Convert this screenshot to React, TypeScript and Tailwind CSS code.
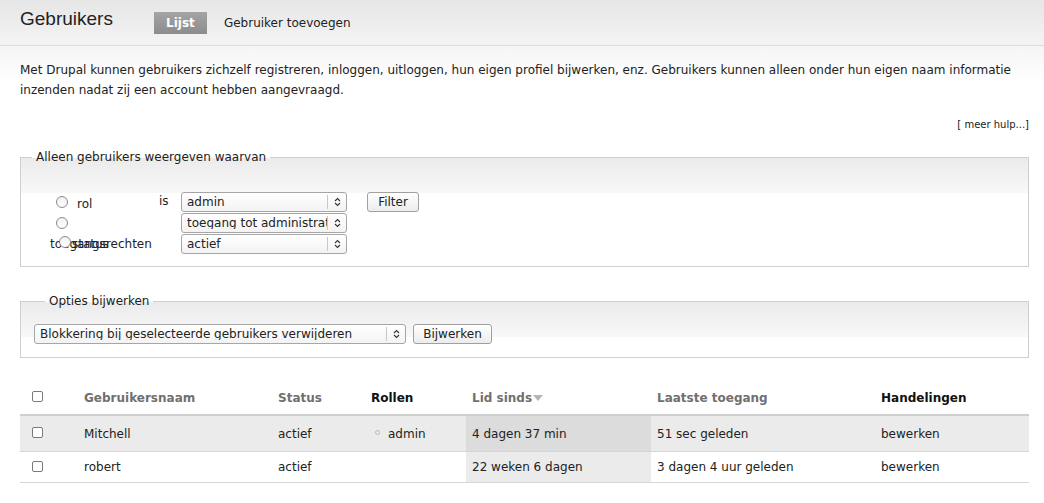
import React from 'react';

// Kleine selectbox met het dubbele pijltje rechts
function SelectBox({ value, width }: { value: string; width: string }) {
  return (
    <div
      className={`${width} h-[20px] flex items-center border border-[#a6a6a6] rounded-[3px] bg-[linear-gradient(to_bottom,#ffffff,#f3f3f3)] overflow-hidden`}
    >
      <span className="flex-1 pl-[5px] whitespace-nowrap overflow-hidden text-[12px] leading-none text-[#222]">{value}</span>
      <span className="w-[19px] h-[14px] border-l border-[#c8c8c8] flex items-center justify-center shrink-0">
        <svg width="7" height="10" viewBox="0 0 7 10" fill="none" stroke="#333" strokeWidth="1.1">
          <path d="M1 4 L3.5 1.5 L6 4" />
          <path d="M1 6 L3.5 8.5 L6 6" />
        </svg>
      </span>
    </div>
  );
}

function Button({ label, width }: { label: string; width: string }) {
  return (
    <button
      className={`${width} h-[20px] border border-[#a0a0a0] rounded-[3px] bg-[linear-gradient(to_bottom,#ffffff,#ececec)] text-[12px] leading-none text-[#222]`}
    >
      {label}
    </button>
  );
}

function Radio() {
  return <span className="inline-block w-[12px] h-[12px] rounded-full border border-[#8a8a8a] bg-[linear-gradient(to_bottom,#f2f2f2,#ffffff)] shrink-0" />;
}

function Checkbox() {
  return <span className="inline-block w-[11px] h-[11px] rounded-[2px] border border-[#7a7a7a] bg-white" />;
}

const gebruikers = [
  { naam: 'Mitchell', status: 'actief', rol: 'admin', sinds: '4 dagen 37 min', toegang: '51 sec geleden', even: false, h: 'h-[36px]' },
  { naam: 'robert', status: 'actief', rol: '', sinds: '22 weken 6 dagen', toegang: '3 dagen 4 uur geleden', even: true, h: 'h-[31px]' },
];

export default function App() {
  return (
    <div className="w-[1044px] min-h-[503px] bg-white text-[#222] font-['DejaVu_Sans',sans-serif] text-[12px]">
      {/* Kop met tabs */}
      <div className="h-[46px] flex items-start border-b border-[#dcdcdc] bg-[linear-gradient(to_bottom,#e6e6e6,#f4f4f4)]">
        <h1 className="ml-[20px] mt-[7px] text-[19px] leading-[24px] font-['Liberation_Sans',Arial,sans-serif] font-normal text-[#222]">
          Gebruikers
        </h1>
        <div className="ml-[41px] mt-[12px] flex items-center">
          <span className="w-[53px] h-[22px] flex items-center justify-center bg-[linear-gradient(to_bottom,#a4a4a4,#8c8c8c)] text-white font-bold text-[12px]">
            Lijst
          </span>
          <span className="ml-[17px] text-[12px] text-[#222]">Gebruiker toevoegen</span>
        </div>
      </div>

      {/* Inhoud */}
      <div className="pl-[20px] pr-[15px] pt-[14px] bg-[linear-gradient(to_bottom,#f5f5f5,#ffffff_36px)]">
        <p className="leading-[20px] text-[12px] text-[#222]">
          Met Drupal kunnen gebruikers zichzelf registreren, inloggen, uitloggen, hun eigen profiel bijwerken, enz. Gebruikers kunnen alleen onder hun eigen naam informatie inzenden nadat zij een account hebben aangevraagd.
        </p>
        <div className="mt-[18px] text-right text-[10px] leading-[14px] text-[#222]">[ meer hulp...]</div>

        {/* Filter */}
        <fieldset className="mt-[17px] border border-[#cfcfcf] bg-[linear-gradient(to_bottom,#ebebeb,#f8f8f8_35px,#ffffff_35px)] pt-[27px] pb-[12px]">
          <legend className="ml-[11px] px-[4px] text-[12px] leading-[16px] text-[#222]">Alleen gebruikers weergeven waarvan</legend>
          <div className="flex flex-col gap-[1px] pl-[29px]">
            <div className="flex items-center h-[20px]">
              <div className="w-[109px] flex items-center pl-[6px]">
                <Radio />
                <span className="ml-[9px] mt-[3px]">rol</span>
              </div>
              <span className="w-[22px] -mt-[2px]">is</span>
              <SelectBox value="admin" width="w-[166px]" />
              <div className="ml-[20px] -mt-[1px]">
                <Button label="Filter" width="w-[52px]" />
              </div>
            </div>
            <div className="flex items-center h-[20px]">
              <div className="w-[109px] flex items-center pl-[6px]">
                <Radio />
              </div>
              <span className="w-[22px]" />
              <SelectBox value="toegang tot administratiepagina" width="w-[166px]" />
            </div>
            <div className="flex items-start h-[20px]">
              {/* labels liggen hier over elkaar heen, net als in het origineel */}
              <div className="w-[131px] h-[20px] relative">
                <span className="block pt-[3px] leading-[15px]">toegangsrechten</span>
                <span className="absolute left-[9px] top-[2px] flex"><Radio /></span>
                <span className="absolute left-[22px] top-[3px] leading-[15px]">status</span>
              </div>
              <SelectBox value="actief" width="w-[166px]" />
            </div>
          </div>
        </fieldset>

        {/* Bijwerken */}
        <fieldset className="mt-[26px] border border-[#cfcfcf] bg-[linear-gradient(to_bottom,#ebebeb,#f8f8f8_35px,#ffffff_35px)] pt-[15px] pb-[13px] pl-[13px]">
          <legend className="ml-[11px] px-[4px] text-[12px] leading-[16px] text-[#222]">Opties bijwerken</legend>
          <div className="flex items-center gap-[7px]">
            <SelectBox value="Blokkering bij geselecteerde gebruikers verwijderen" width="w-[372px]" />
            <Button label="Bijwerken" width="w-[79px]" />
          </div>
        </fieldset>

        {/* Tabel */}
        <div className="mt-[24px] text-[12px]">
          <div className="grid grid-cols-[58px_194px_93px_101px_185px_224px_1fr] h-[34px] items-center border-b-2 border-[#cfcfcf] font-bold">
            <div className="pl-[12px] flex items-center -mt-[3px]"><Checkbox /></div>
            <div className="pl-[6px] text-[#707070]">Gebruikersnaam</div>
            <div className="pl-[6px] text-[#707070]">Status</div>
            <div className="pl-[6px] text-[#111]">Rollen</div>
            <div className="pl-[6px] text-[#707070] flex items-center">
              Lid sinds
              <svg width="10" height="6" viewBox="0 0 10 6" className="ml-[1px]">
                <path d="M0 0 L10 0 L5 6 Z" fill="#b5b5b5" />
              </svg>
            </div>
            <div className="pl-[6px] text-[#707070]">Laatste toegang</div>
            <div className="pl-[6px] text-[#111]">Handelingen</div>
          </div>
          {gebruikers.map((g) => (
            <div
              key={g.naam}
              className={`grid grid-cols-[58px_194px_93px_101px_185px_224px_1fr] ${g.h} items-stretch border-b border-[#d6d6d6] ${g.even ? 'bg-white' : 'bg-[#ebebeb]'}`}
            >
              <div className="pl-[12px] flex items-center -mt-[2px]"><Checkbox /></div>
              <div className="pl-[6px] flex items-center">{g.naam}</div>
              <div className="pl-[6px] flex items-center">{g.status}</div>
              <div className="pl-[10px] flex items-center">
                {g.rol && (
                  <>
                    <span className="w-[5px] h-[5px] rounded-full border border-[#b8b8b8] -mt-[3px]" />
                    <span className="ml-[8px]">{g.rol}</span>
                  </>
                )}
              </div>
              <div className={`pl-[6px] flex items-center ${g.even ? 'bg-[#ebebeb]' : 'bg-[#dcdcdc]'}`}>{g.sinds}</div>
              <div className="pl-[6px] flex items-center">{g.toegang}</div>
              <div className="pl-[6px] flex items-center">bewerken</div>
            </div>
          ))}
        </div>
      </div>
    </div>
  );
}
